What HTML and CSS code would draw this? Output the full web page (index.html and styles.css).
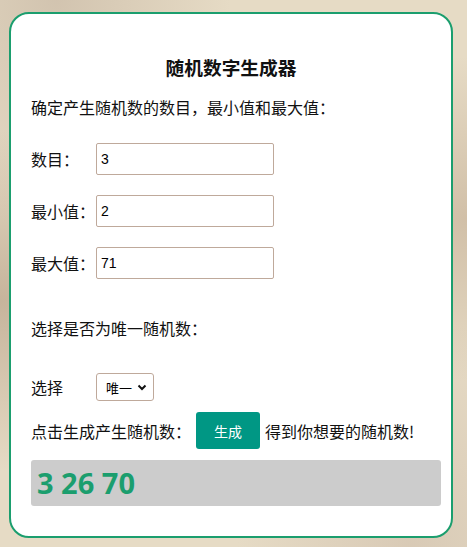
FILE: index.html
```html
<!DOCTYPE html>
<html lang="zh-CN">
<head>
    <meta charset="UTF-8">
    <meta name="viewport" content="width=device-width, initial-scale=1.0">
    <title>随机数字生成器</title>
    <link rel="stylesheet" href="styles.css">
</head>
<body>

    <div class="container">
        <h3 class="title">随机数字生成器</h3>

        <p class="intro">确定产生随机数的数目，最小值和最大值：</p>

        <div class="field">
            <label for="count">数目：</label>
            <input type="text" id="count" value="3">
        </div>
        <div class="field">
            <label for="min">最小值：</label>
            <input type="text" id="min" value="2">
        </div>
        <div class="field">
            <label for="max">最大值：</label>
            <input type="text" id="max" value="71">
        </div>

        <p class="unique-text">选择是否为唯一随机数：</p>

        <div class="field select-row">
            <label for="unique">选择</label>
            <div class="select-wrap">
                <select id="unique">
                    <option value="1">唯一</option>
                    <option value="0">重复</option>
                </select>
                <svg class="chevron" width="10" height="7" viewBox="0 0 10 7">
                    <path d="M1.5 1.5 L5 5 L8.5 1.5" fill="none" stroke="#111" stroke-width="2"/>
                </svg>
            </div>
        </div>

        <div class="action-row">
            <span>点击生成产生随机数：</span>
            <button id="generateBtn" onclick="generate()">生成</button>
            <span>得到你想要的随机数!</span>
        </div>

        <div class="result" id="result">3 26 70</div>
    </div>

    <script>
        // Generate random numbers between min and max
        function generate() {
            const count = parseInt(document.getElementById("count").value, 10);
            const min = parseInt(document.getElementById("min").value, 10);
            const max = parseInt(document.getElementById("max").value, 10);
            const unique = document.getElementById("unique").value === "1";
            const result = [];

            if (isNaN(count) || isNaN(min) || isNaN(max) || min > max) return;
            if (unique && count > max - min + 1) return;

            while (result.length < count) {
                const n = Math.floor(Math.random() * (max - min + 1)) + min;
                if (unique && result.includes(n)) continue;
                result.push(n);
            }

            result.sort(function (a, b) { return a - b; });
            document.getElementById("result").textContent = result.join(" ");
        }
    </script>

</body>
</html>
```

FILE: styles.css
```css
body {
    font-family: "Noto Sans CJK SC", "Noto Sans", sans-serif;
    font-size: 16px;
    color: #111;
    margin: 0;
    height: 547px;
    overflow: hidden;
    background-color: #e6dbc5;
    background-image:
        radial-gradient(ellipse at 0% 55%, rgba(190, 170, 145, 0.8), transparent 40%),
        radial-gradient(ellipse at 100% 40%, rgba(200, 180, 155, 0.7), transparent 35%),
        radial-gradient(ellipse at 12% 0%, rgba(205, 190, 170, 0.8), transparent 30%),
        radial-gradient(ellipse at 88% 100%, rgba(215, 200, 180, 0.9), transparent 30%);
}
.container {
    box-sizing: border-box;
    width: 444px;
    height: 526px;
    margin: 12px 0 0 9px;
    padding: 0 10px 0 20px;
    background-color: #fff;
    border: 2px solid #1b9e6e;
    border-radius: 20px;
    display: flex;
    flex-direction: column;
}
.title {
    margin: 40px 10px 0 0;
    font-size: 18.7px;
    line-height: 26px;
    font-weight: bold;
    text-align: center;
}
.intro {
    margin: 15px 0 0;
    line-height: 24px;
}
.field {
    display: flex;
    align-items: center;
    margin-top: 24px;
}
.field + .field {
    margin-top: 20px;
}
.field label {
    width: 65px;
    line-height: 24px;
}
.field input[type="text"] {
    box-sizing: border-box;
    width: 178px;
    height: 32px;
    padding: 0 4px;
    font-family: "Liberation Sans", Arial, sans-serif;
    font-size: 14px;
    color: #000;
    border: 1px solid #bfa99b;
    border-radius: 2px;
}
.unique-text {
    margin: 37px 0 0;
    line-height: 24px;
}
.field.select-row {
    margin-top: 33px;
}
.select-wrap {
    position: relative;
    display: flex;
}
.select-wrap select {
    box-sizing: border-box;
    width: 58px;
    height: 28px;
    padding: 0 0 0 9px;
    appearance: none;
    -webkit-appearance: none;
    font-family: "Noto Sans CJK SC", sans-serif;
    font-size: 13px;
    color: #000;
    background-color: #fff;
    border: 1px solid #bfa99b;
    border-radius: 3px;
}
.chevron {
    position: absolute;
    right: 7px;
    top: 11px;
    pointer-events: none;
}
.action-row {
    display: flex;
    align-items: center;
    gap: 5px;
    margin-top: 11px;
    line-height: 24px;
}
.action-row button {
    width: 64px;
    height: 37px;
    border: none;
    border-radius: 3px;
    background-color: #009784;
    color: #fff;
    font-family: "Noto Sans CJK SC", sans-serif;
    font-size: 14px;
    cursor: pointer;
}
.result {
    margin-top: 11px;
    width: 410px;
    height: 46px;
    box-sizing: border-box;
    padding-left: 6px;
    background-color: #cccccc;
    border-radius: 3px;
    font-family: "Open Sans", sans-serif;
    font-size: 29px;
    font-weight: bold;
    line-height: 46px;
    color: #1b9e6e;
}
```
